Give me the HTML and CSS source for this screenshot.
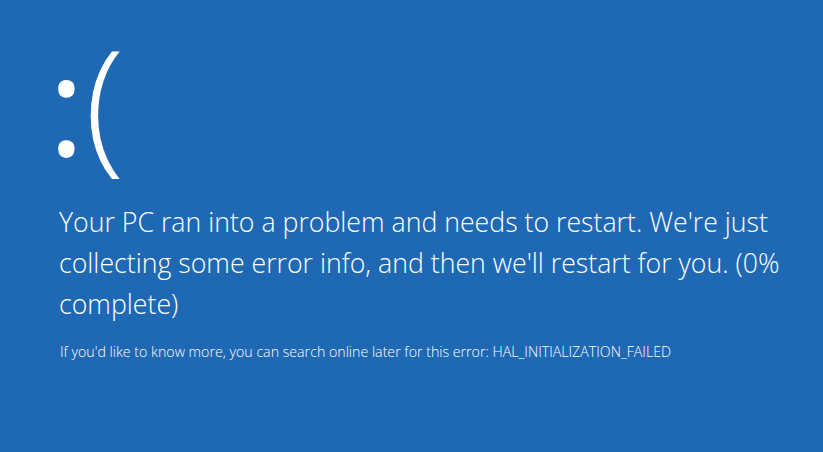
FILE: index.html
```html
<!DOCTYPE html>
<html lang="en">
    <head>
        <meta charset="UTF-8">
        <meta name="viewport" content="width=device-width, initial-scale=1.0">
        <title>Stop Error</title>
        <link rel="stylesheet" href="styles.css">
    </head>
    <body>
        <div class="screen">
            <div class="face"><span class="eyes">:</span><span class="mouth">(</span></div>
            <p class="message">Your PC ran into a problem and needs to restart. We're just collecting some error info, and then we'll restart for you. (0% complete)</p>
            <p class="details">If you'd like to know more, you can search online later for this error: HAL_INITIALIZATION_FAILED</p>
        </div>
    </body>
</html>
```

FILE: styles.css
```css
html, body {
    margin: 0;
    height: 100%;
}
body {
    background-color: #1f68b4;
    color: #ffffff;
    font-family: "Open Sans", "Noto Sans", sans-serif;
    font-weight: 300;
}
.screen {
    padding: 20px 40px 0 59px;
}
.face {
    display: flex;
    align-items: baseline;
    height: 170px;
    margin-left: -11px;
}
.eyes {
    font-size: 140px;
    line-height: 160px;
    font-weight: 400;
}
.mouth {
    font-size: 146px;
    line-height: 160px;
    font-weight: 300;
}
.message {
    margin: 11px 0 0;
    font-size: 26.7px;
    line-height: 41px;
    max-width: 730px;
}
.details {
    margin: 18px 0 0 1px;
    font-size: 14.2px;
}
```
